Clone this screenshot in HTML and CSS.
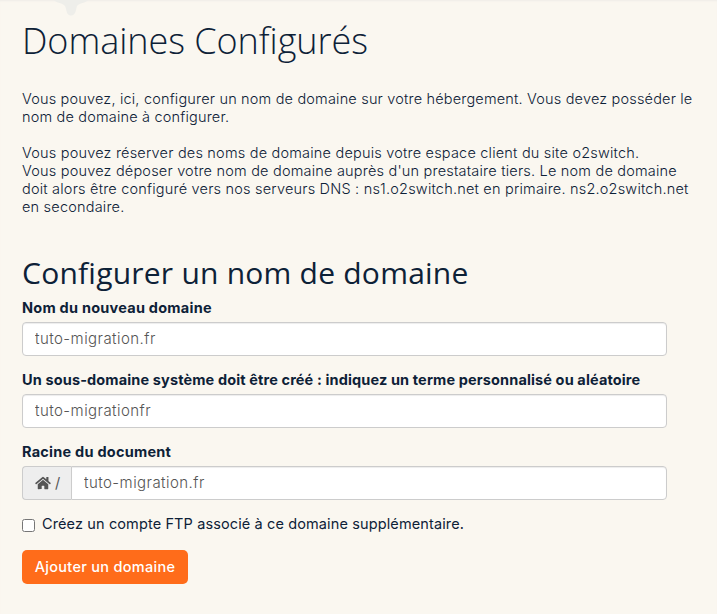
FILE: index.html
```html
<!DOCTYPE html>
<html lang="fr">
<head>
<meta charset="utf-8">
<title>Domaines Configurés</title>
<link rel="stylesheet" href="styles.css">
</head>
<body>
<svg class="watermark" width="34" height="16" viewBox="0 0 34 16" aria-hidden="true"><path d="M0 0H34C32 3 25 3 23 6C22 9 22 15.500 17 15.500C12 15.500 13 10 11 6C9 3 2 3 0 0Z"/></svg>
<main>
  <h1>Domaines Configurés</h1>
  <p class="intro">Vous pouvez, ici, configurer un nom de domaine sur votre hébergement. Vous devez posséder le<br>nom de domaine à configurer.</p>
  <p class="details">Vous pouvez réserver des noms de domaine depuis votre espace client du site o2switch.<br>Vous pouvez déposer votre nom de domaine auprès d'un prestataire tiers. Le nom de domaine<br>doit alors être configuré vers nos serveurs DNS : ns1.o2switch.net en primaire. ns2.o2switch.net<br>en secondaire.</p>
  <h2>Configurer un nom de domaine</h2>
  <form>
    <div class="field">
      <label for="domain">Nom du nouveau domaine</label>
      <input class="control" id="domain" type="text" value="tuto-migration.fr">
    </div>
    <div class="field">
      <label class="long" for="subdomain">Un sous-domaine système doit être créé : indiquez un terme personnalisé ou aléatoire</label>
      <input class="control" id="subdomain" type="text" value="tuto-migrationfr">
    </div>
    <div class="field">
      <label for="root">Racine du document</label>
      <div class="group">
        <span class="addon"><svg width="16" height="14" viewBox="0 0 576 512" aria-hidden="true"><path d="M280.400 148.300 96 300.100V464a16 16 0 0 0 16 16l112-.3a16 16 0 0 0 16-16V368a16 16 0 0 1 16-16h64a16 16 0 0 1 16 16v96a16 16 0 0 0 16 16l112 .3a16 16 0 0 0 16-16V300L295.700 148.300a12 12 0 0 0-15.300 0zM571.600 251.500 488 182.600V44a12 12 0 0 0-12-12h-56a12 12 0 0 0-12 12v72.600L318.500 43a48 48 0 0 0-61 0L4.300 251.500a12 12 0 0 0-1.600 16.900l25.500 31a12 12 0 0 0 16.900 1.600l235.200-193.700a12 12 0 0 1 15.300 0L530.900 301a12 12 0 0 0 16.900-1.600l25.500-31a12 12 0 0 0-1.700-16.900z"/></svg><span>/</span></span>
        <input class="control" id="root" type="text" value="tuto-migration.fr">
      </div>
    </div>
    <label class="check"><input type="checkbox"><span>Créez un compte FTP associé à ce domaine supplémentaire.</span></label>
    <button type="button">Ajouter un domaine</button>
  </form>
</main>
</body>
</html>
```

FILE: styles.css
```css
* { box-sizing: border-box; }
body {
  margin: 0;
  min-height: 614px;
  background: #faf7f0;
  box-shadow: inset 0 2px 2px -1px #efede8;
  color: #0d2137;
  font: 300 14.5px/18px Inter, "Liberation Sans", sans-serif;
}
.watermark { position: absolute; left: 54px; top: 0; fill: #eeeeea; }
main { padding: 16px 22px 0; }
h1, h2 { margin: 0; font-family: "Open Sans", sans-serif; white-space: nowrap; }
h1 { font-size: 36px; line-height: 50px; font-weight: 300; letter-spacing: -.05px; }
h2 { margin-top: 37px; font-size: 30px; line-height: 40px; font-weight: 400; letter-spacing: .23px; }
p { margin: 0; white-space: nowrap; }
.intro { margin-top: 24px; letter-spacing: .18px; }
.details { margin-top: 18px; letter-spacing: .2px; }
form { width: 645px; margin-top: 5px; }
.field { margin-bottom: 14px; }
.field label { display: block; margin-bottom: 5px; line-height: 19px; font-weight: 700; letter-spacing: .24px; white-space: nowrap; }
.field .long { letter-spacing: .13px; }
.control {
  display: block;
  width: 100%;
  height: 34px;
  padding: 5px 12px 7px;
  border: 1px solid #ccc;
  border-radius: 4px;
  background: #fff;
  box-shadow: inset 0 1px 1px rgba(0, 0, 0, .075);
  color: #555;
  font: inherit;
  font-size: 15px;
  letter-spacing: .45px;
  outline: 0;
}
.group { display: flex; }
.group .control { flex: 1; border-radius: 0 4px 4px 0; }
.addon {
  display: flex;
  align-items: center;
  gap: 4px;
  width: 49px;
  padding-left: 12px;
  border: 1px solid #ccc;
  border-right: 0;
  border-radius: 4px 0 0 4px;
  background: #eee;
  color: #555;
  font-weight: 400;
}
.addon svg { fill: #555; }
.check { display: flex; align-items: center; gap: 7px; height: 20px; font-weight: 400; letter-spacing: .12px; white-space: nowrap; }
.check input { width: 13px; height: 13px; margin: 2px 0 0; }
button {
  display: block;
  width: 166px;
  height: 34px;
  margin-top: 16px;
  padding: 0;
  border: 0;
  border-radius: 5px;
  background: #ff6c1a;
  color: #fff;
  font: 500 14.5px/20px Inter, sans-serif;
  letter-spacing: .3px;
}
```
